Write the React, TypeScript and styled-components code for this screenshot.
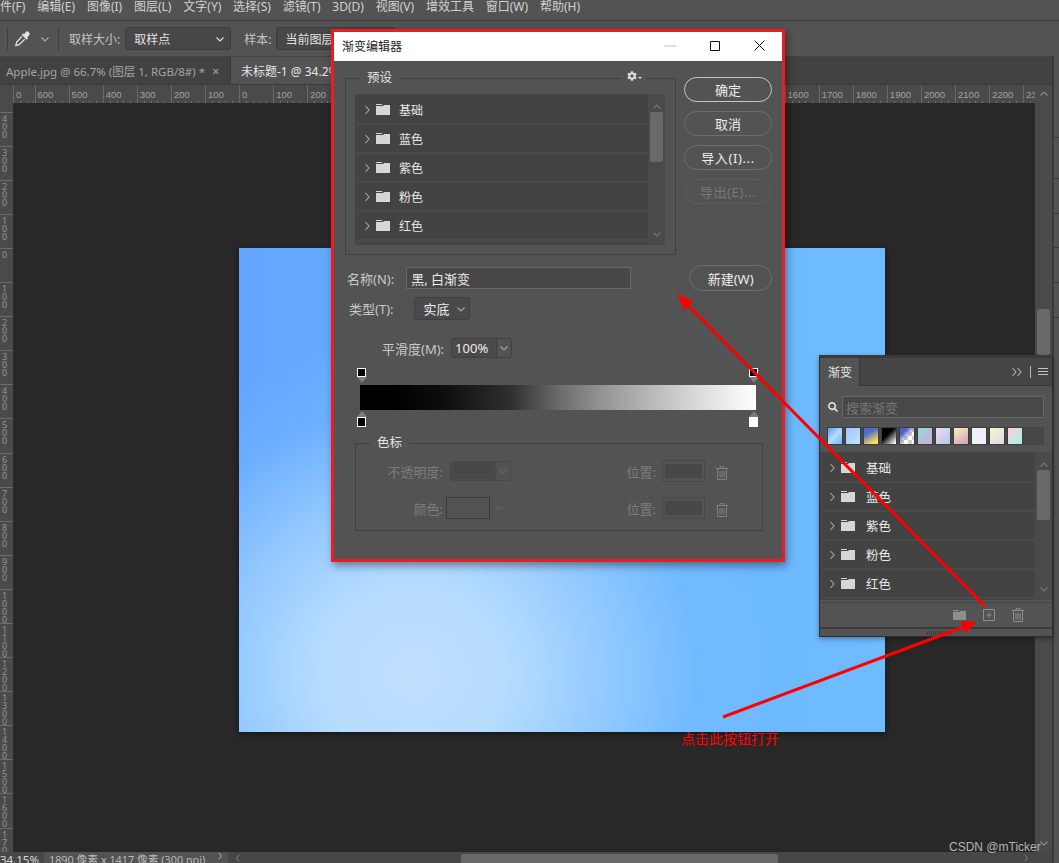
import React from "react";
import styled, { createGlobalStyle } from "styled-components";
import { FaCog, FaSearch } from "react-icons/fa";

const GlobalStyle = createGlobalStyle`
  html, body {
    margin: 0;
    padding: 0;
    background: #535353;
    overflow: hidden;
  }
  * {
    box-sizing: border-box;
  }
`;

const Page = styled.div`
  position: relative;
  width: 1059px;
  height: 863px;
  overflow: hidden;
  background: #535353;
  color: #d6d6d6;
  font-family: "Noto Sans", "Noto Sans CJK SC", sans-serif;
  font-size: 12px;
`;

const MenuBar = styled.div`
  display: flex;
  gap: 11.8px;
  height: 21px;
  margin-left: -12px;
  border-bottom: 1px solid #3c3c3c;
  overflow: hidden;
  line-height: 13px;
  white-space: nowrap;
  color: #d2d2d2;
`;

const OptionsBar = styled.div`
  display: flex;
  align-items: center;
  height: 35px;
  white-space: nowrap;
`;

const OptionDivider = styled.div<{ $left: number }>`
  width: 1px;
  height: 24px;
  margin-left: ${(p) => p.$left}px;
  background: #3f3f3f;
`;

const OptionLabel = styled.span<{ $left: number }>`
  margin-left: ${(p) => p.$left}px;
  color: #c4c4c4;
`;

const OptionIcon = styled.span<{ $left: number; $shade: string }>`
  display: flex;
  margin-left: ${(p) => p.$left}px;
  color: ${(p) => p.$shade};
`;

const OptionSelect = styled.div<{ $width: number; $left: number }>`
  display: flex;
  flex: none;
  align-items: center;
  justify-content: space-between;
  width: ${(p) => p.$width}px;
  height: 23px;
  margin-left: ${(p) => p.$left}px;
  padding: 0 5px 0 8px;
  border: 1px solid #3d3d3d;
  border-radius: 3px;
  background: #474747;
  color: #e2e2e2;
`;

const Lower = styled.div`
  display: flex;
  height: 807px;
`;

const Dock = styled.div`
  flex: none;
  width: 7px;
  border-left: 2px solid #3a3a3a;
  background:
    linear-gradient(#3a3a3a, #3a3a3a) 0 81px / 100% 1px no-repeat,
    linear-gradient(#3a3a3a, #3a3a3a) 0 122px / 100% 1px no-repeat,
    linear-gradient(#3a3a3a, #3a3a3a) 0 157px / 100% 1px no-repeat,
    linear-gradient(#3a3a3a, #3a3a3a) 0 191px / 100% 1px no-repeat,
    linear-gradient(#3a3a3a, #3a3a3a) 0 226px / 100% 1px no-repeat,
    linear-gradient(#3a3a3a, #3a3a3a) 0 261px / 100% 1px no-repeat,
    #535353;
`;

const DocArea = styled.div`
  display: flex;
  flex: 1;
  flex-direction: column;
  min-width: 0;
`;

const TabBar = styled.div`
  display: flex;
  flex: none;
  height: 29px;
  background: #424242;
  border-top: 1px solid #454545;
  border-bottom: 1px solid #3a3a3a;
  white-space: nowrap;
`;

const DocTab = styled.div<{ $active?: boolean }>`
  display: flex;
  flex: none;
  align-items: center;
  width: ${(p) => (p.$active ? "140px" : "231px")};
  padding-left: ${(p) => (p.$active ? "10px" : "6px")};
  background: ${(p) => (p.$active ? "#535353" : "#424242")};
  color: ${(p) => (p.$active ? "#e6e6e6" : "#a4a4a4")};
  border-right: 1px solid #3a3a3a;
  font-size: ${(p) => (p.$active ? "12px" : "11.5px")};
`;

const TabClose = styled.span`
  margin-left: 7px;
  font-size: 13px;
`;

const RulerRow = styled.div`
  display: flex;
  flex: none;
  height: 18px;
  padding-left: 13px;
  background: #4a4a4a;
`;

const RulerTrack = styled.div`
  display: flex;
  flex: none;
  width: 1022px;
  overflow: hidden;
`;

const RulerCell = styled.div<{ $size?: number }>`
  flex: none;
  width: ${(p) => p.$size ?? 34.1}px;
  padding: 3px 0 0 2px;
  border-left: 1px solid #6a6a6a;
  background: repeating-linear-gradient(90deg, transparent 0 5.8px, #707070 5.8px 6.82px) 0 100% / 100% 2px no-repeat;
  font-family: "Liberation Sans", sans-serif;
  font-size: 9.5px;
  line-height: 13px;
  color: #a2a2a2;
`;

const RulerEnd = styled.div`
  display: flex;
  flex: none;
  justify-content: center;
  width: 17px;
  padding-top: 4px;
  color: #8c8c8c;
`;

const Workspace = styled.div`
  display: flex;
  flex: 1;
  min-height: 0;
`;

const VerticalRuler = styled.div`
  flex: none;
  width: 13px;
  overflow: hidden;
  padding-top: 8.6px;
  background: #4a4a4a;
`;

const VerticalCell = styled.div`
  display: flex;
  flex-direction: column;
  height: 34.1px;
  padding: 2px 0 0 2px;
  border-top: 1px solid #6a6a6a;
  font-size: 9px;
  line-height: 8px;
  color: #949494;
`;

const Canvas = styled.div`
  flex: 1;
  padding: 145px 0 0 226px;
  background: #282828;
`;

const Artboard = styled.div`
  width: 646px;
  height: 484px;
  box-shadow: 0 2px 6px rgba(0, 0, 0, 0.45);
  background:
    radial-gradient(ellipse 360px 340px at 27% 88%, #c0e0ff 0%, #b6dcff 26%, rgba(155, 206, 255, 0.85) 52%, rgba(125, 190, 255, 0.35) 78%, rgba(115, 185, 255, 0) 100%),
    linear-gradient(90deg, #62a5ff 0%, #68aeff 30%, #6cb8ff 62%, #6ebbff 100%);
`;

const VerticalScroll = styled.div`
  position: relative;
  flex: none;
  width: 17px;
  padding: 206px 2px 0;
  background: #4a4a4a;
`;

const DocScrollDown = styled.span`
  position: absolute;
  left: 4px;
  bottom: 4px;
  display: flex;
  color: #8c8c8c;
`;

const ScrollThumb = styled.div<{ $height: number }>`
  height: ${(p) => p.$height}px;
  border-radius: 2px;
  background: #696969;
`;

const StatusBar = styled.div`
  display: flex;
  flex: none;
  height: 11px;
  overflow: hidden;
  background: #474747;
  line-height: 16px;
  white-space: nowrap;
`;

const StatusZoom = styled.div`
  flex: none;
  width: 44px;
  color: #d8d8d8;
  font-size: 11.5px;
`;

const StatusInfo = styled.div`
  display: flex;
  flex: none;
  justify-content: space-between;
  align-items: flex-start;
  width: 184px;
  padding: 0 4px 0 5px;
  background: #535353;
  color: #b8b8b8;
  font-size: 10.8px;
`;

const HorizontalScroll = styled.div`
  position: relative;
  display: flex;
  flex: 1;
  padding: 2px 0 0 233px;
`;

const HorizontalThumb = styled.div`
  width: 317px;
  height: 9px;
  border-radius: 2px 2px 0 0;
  background: #696969;
`;

const HorizontalArrow = styled.span<{ $at: number }>`
  position: absolute;
  left: ${(p) => p.$at}px;
  top: 2px;
  display: flex;
  color: #8c8c8c;
`;

const Dialog = styled.div`
  position: absolute;
  left: 331px;
  top: 29px;
  width: 454px;
  height: 533px;
  border: 3px solid #ed1c24;
  background: #535353;
  box-shadow: 2px 4px 8px rgba(0, 0, 0, 0.4);
`;

const TitleBar = styled.div`
  display: flex;
  align-items: center;
  height: 29px;
  padding-left: 8px;
  background: #fff;
  color: #222;
  font-size: 12px;
`;

const TitleText = styled.span`
  margin-bottom: 2px;
`;

const WindowControls = styled.div`
  display: flex;
  margin-left: auto;
`;

const WindowControl = styled.div`
  display: flex;
  align-items: center;
  justify-content: center;
  width: 45px;
  height: 29px;
  padding-bottom: 2px;
`;

const DialogTop = styled.div`
  display: flex;
  align-items: flex-start;
  padding: 17px 0 0 11px;
`;

const GroupBox = styled.div<{ $width: number; $height: number; $margin?: string }>`
  position: relative;
  flex: none;
  width: ${(p) => p.$width}px;
  height: ${(p) => p.$height}px;
  margin: ${(p) => p.$margin ?? "0"};
  border: 1px solid #404040;
`;

const GroupTitle = styled.div<{ $left: number }>`
  width: fit-content;
  height: 16px;
  margin: -9px 0 0 ${(p) => p.$left}px;
  padding: 0 7px;
  background: #535353;
  color: #e4e4e4;
  font-size: 12.5px;
  line-height: 16px;
`;

const GearMenu = styled.div`
  position: absolute;
  top: -8px;
  right: 29px;
  display: flex;
  align-items: flex-end;
  gap: 1px;
  padding: 0 4px 0 5px;
  background: #535353;
  color: #d8d8d8;
`;

const Caret = styled.span`
  width: 0;
  height: 0;
  margin-bottom: 2px;
  border: 2px solid transparent;
  border-top: 2px solid #d8d8d8;
  border-bottom: 0;
`;

const ListFrame = styled.div<{ $margin: string; $height: number }>`
  display: flex;
  height: ${(p) => p.$height}px;
  margin: ${(p) => p.$margin};
  overflow: hidden;
  background: #444;
`;

const ListBody = styled.div`
  flex: 1;
  min-width: 0;
  padding: 2px 0 0 2px;
`;

const FolderRow = styled.div<{ $fontSize: number }>`
  display: flex;
  align-items: center;
  height: 29px;
  padding-left: 5px;
  border-bottom: 2px solid #4a4a4a;
  background: #434343;
  color: #e8e8e8;
  font-size: ${(p) => p.$fontSize}px;
`;

const RowChevron = styled.span`
  display: flex;
  color: #a8a8a8;
`;

const FolderMark = styled.span`
  display: flex;
  margin-left: 4px;
  color: #d6d6d6;
`;

const FolderName = styled.span<{ $gap: number }>`
  margin-left: ${(p) => p.$gap}px;
`;

const ListScroll = styled.div`
  position: relative;
  flex: none;
  width: 17px;
  padding: 18px 2px 0;
  background: #4a4a4a;
  color: #777;
`;

const ScrollArrow = styled.span<{ $end: "top" | "bottom" }>`
  position: absolute;
  left: 4px;
  ${(p) => (p.$end === "top" ? "top: 8px;" : "bottom: 6px;")}
  display: flex;
`;

const ButtonColumn = styled.div`
  display: flex;
  flex: none;
  flex-direction: column;
  gap: 9px;
  width: 88px;
  margin: -1px 0 0 8px;
`;

const PillButton = styled.div<{ $kind?: "primary" | "disabled"; $wide?: boolean }>`
  display: flex;
  flex: none;
  align-items: center;
  justify-content: center;
  height: 25px;
  border: 1.5px solid
    ${(p) => (p.$kind === "primary" ? "#c4c4c4" : p.$kind === "disabled" ? "#5d5d5d" : "#6e6e6e")};
  border-radius: 13px;
  color: ${(p) => (p.$kind === "disabled" ? "#787878" : "#ececec")};
  font-size: 13px;
  letter-spacing: ${(p) => (p.$wide ? "0.6px" : "0")};
`;

const NewButton = styled(PillButton)`
  width: 83px;
  height: 26px;
  margin-left: 58px;
`;

const FieldRow = styled.div<{ $top: number; $left: number }>`
  display: flex;
  align-items: center;
  margin: ${(p) => p.$top}px 0 0 ${(p) => p.$left}px;
  white-space: nowrap;
`;

const FieldLabel = styled.span<{ $width?: number; $gap: number; $muted?: boolean }>`
  flex: none;
  width: ${(p) => (p.$width ? `${p.$width}px` : "auto")};
  margin-right: ${(p) => p.$gap}px;
  text-align: right;
  color: ${(p) => (p.$muted ? "#7d7d7d" : "#c8c8c8")};
  font-size: 13px;
`;

const NameInput = styled.div`
  display: flex;
  align-items: center;
  width: 225px;
  height: 22px;
  padding-left: 4px;
  border: 1px solid #686868;
  background: #474747;
  color: #ececec;
  font-size: 13px;
`;

const TypeSelect = styled.div`
  display: flex;
  align-items: center;
  justify-content: space-between;
  width: 56px;
  height: 23px;
  padding: 0 3px 0 9px;
  border: 1px solid #404040;
  border-radius: 3px;
  background: #4a4a4a;
  color: #ececec;
  font-size: 13px;
`;

const SoftChevron = styled.span`
  display: flex;
  color: #a8a8a8;
`;

const SpinBox = styled.div<{ $muted?: boolean }>`
  display: flex;
  flex: none;
  width: 61px;
  height: 20px;
  border: 1px solid ${(p) => (p.$muted ? "#484848" : "#404040")};
  border-radius: 3px;
  background: #4a4a4a;
  color: #ececec;
  font-size: 13px;
  line-height: 18px;
`;

const SpinValue = styled.div`
  flex: 1;
  padding-left: 3px;
`;

const SpinButton = styled.div<{ $muted?: boolean }>`
  display: flex;
  flex: none;
  align-items: center;
  justify-content: center;
  width: 15px;
  border-left: 1px solid ${(p) => (p.$muted ? "#484848" : "#404040")};
  background: #535353;
  border-radius: 0 3px 3px 0;
  color: ${(p) => (p.$muted ? "#666" : "#a8a8a8")};
`;

const MutedSpinValue = styled.div`
  flex: 1;
  margin: 2px;
  background: #474747;
`;

const GradientEditor = styled.div`
  width: 401px;
  margin: 10px 0 0 23px;
`;

const StopRow = styled.div<{ $top?: number }>`
  display: flex;
  justify-content: space-between;
  margin-top: ${(p) => p.$top ?? 0}px;
`;

const StopMarker = styled.div<{ $below?: boolean }>`
  display: flex;
  flex-direction: ${(p) => (p.$below ? "column" : "column-reverse")};
  align-items: center;
  width: 9px;
`;

const StopArrow = styled.div<{ $below?: boolean }>`
  width: 0;
  height: 0;
  border-left: 5px solid transparent;
  border-right: 5px solid transparent;
  ${(p) => (p.$below ? "border-bottom: 6px solid #7d7d7d;" : "border-top: 6px solid #7d7d7d;")}
`;

const StopSquare = styled.div<{ $fill: string; $below?: boolean }>`
  width: 9px;
  height: ${(p) => (p.$below ? "10px" : "9px")};
  border: 1.5px solid #fff;
  background: ${(p) => p.$fill};
`;

const GradientBar = styled.div`
  width: 396px;
  height: 25px;
  margin: 2px 0 0 3px;
  background: linear-gradient(90deg, #000 0%, #000 8%, #0f0f0f 22%, #2f2f2f 38%, #6a6a6a 50%, #909090 60%, #b4b4b4 72%, #dcdcdc 86%, #fff 100%);
`;

const StopFields = styled.div<{ $top: number }>`
  display: flex;
  align-items: center;
  height: 22px;
  margin-top: ${(p) => p.$top}px;
  padding-right: 34px;
`;

const ColorSwatch = styled.div`
  flex: none;
  width: 44px;
  height: 22px;
  border: 1px solid #3a3a3a;
`;

const SwatchCaret = styled.span`
  display: flex;
  margin-left: 4px;
  color: #666;
`;

const PositionField = styled.div`
  display: flex;
  flex: none;
  width: 43px;
  height: 22px;
  margin-right: 11px;
  padding: 3px 2px;
  border: 1px solid #484848;
`;

const PositionFill = styled.div`
  flex: 1;
  background: #474747;
`;

const FieldSpacer = styled.div`
  flex: 1;
`;

const TrashMark = styled.span`
  display: flex;
  margin-top: 3px;
  color: #808080;
`;

const GradientPanel = styled.div`
  position: absolute;
  left: 819px;
  top: 355px;
  width: 234px;
  height: 282px;
  border: 1px solid #2f2f2f;
  border-top-width: 3px;
  border-top-color: #3a3a3a;
  background: #535353;
  box-shadow: 0 2px 5px rgba(0, 0, 0, 0.35);
`;

const PanelHeader = styled.div`
  display: flex;
  align-items: center;
  height: 28px;
  background: #444;
  border-bottom: 1px solid #383838;
`;

const PanelTab = styled.div`
  display: flex;
  align-items: center;
  align-self: stretch;
  width: 40px;
  height: 28px;
  padding-left: 8px;
  background: #535353;
  border-right: 1px solid #383838;
  color: #e6e6e6;
`;

const PanelActions = styled.div`
  display: flex;
  align-items: center;
  margin-left: auto;
  padding-right: 4px;
  color: #b4b4b4;
`;

const DoubleChevron = styled.span`
  display: flex;
  margin-left: -5px;
`;

const PanelPipe = styled.span`
  width: 1px;
  height: 12px;
  margin: 0 7px 0 6px;
  background: #b4b4b4;
`;

const MenuLines = styled.span`
  width: 10px;
  height: 7px;
  border-top: 1px solid #c4c4c4;
  border-bottom: 1px solid #c4c4c4;
  background: linear-gradient(#c4c4c4, #c4c4c4) 0 50% / 100% 1px no-repeat;
`;

const SearchRow = styled.div`
  display: flex;
  align-items: center;
  gap: 4px;
  margin-top: 10px;
  padding-left: 8px;
  color: #e6e6e6;
`;

const SearchInput = styled.div`
  display: flex;
  align-items: center;
  width: 202px;
  height: 22px;
  padding-left: 3px;
  border: 1px solid #666;
  background: #484848;
  color: #777;
  font-size: 13px;
`;

const SwatchStrip = styled.div`
  display: flex;
  gap: 2px;
  width: 217px;
  height: 18px;
  margin: 9px 0 0 7px;
  background: #474747;
`;

const Swatch = styled.div<{ $fill: string }>`
  flex: none;
  width: 16px;
  height: 18px;
  border: 1px solid #3c3c3c;
  background: ${(p) => p.$fill};
`;

const PanelFooter = styled.div`
  display: flex;
  align-items: center;
  justify-content: flex-end;
  gap: 17px;
  height: 27px;
  margin-top: 2px;
  padding-right: 28px;
  border-top: 1px solid #444;
  border-bottom: 2px solid #3a3a3a;
  color: #8e8e8e;
`;

const PanelGrip = styled.div`
  display: flex;
  justify-content: center;
  padding-top: 2px;
`;

const GripLines = styled.div`
  width: 19px;
  height: 4px;
  background: repeating-linear-gradient(90deg, #3c3c3c 0 1px, transparent 1px 2px);
`;

const Annotations = styled.svg`
  position: absolute;
  left: 0;
  top: 0;
  pointer-events: none;
`;

const NoteText = styled.div`
  position: absolute;
  left: 681px;
  top: 730px;
  color: #f00;
  font-size: 14px;
  line-height: 18px;
`;

const Watermark = styled.div`
  position: absolute;
  left: 949px;
  top: 839px;
  color: #b4b4b4;
  font-family: "Liberation Sans", sans-serif;
  font-size: 12px;
  line-height: 16px;
`;

type ChevronDir = "up" | "down" | "left" | "right";

const Chevron = ({ dir = "down", size = 10 }: { dir?: ChevronDir; size?: number }) => {
  const shapes: Record<ChevronDir, string> = {
    up: "M1.5 6.5 5 3l3.5 3.5",
    down: "M1.5 3.5 5 7l3.5-3.5",
    left: "M6.5 1 3 5l3.5 4",
    right: "M3.5 1 7 5l-3.5 4",
  };
  return (
    <svg width={size} height={size} viewBox="0 0 10 10" fill="none" stroke="currentColor" strokeWidth="1.1">
      <path d={shapes[dir]} />
    </svg>
  );
};

const FolderIcon = ({ width = 14 }: { width?: number }) => (
  <svg width={width} height={(width * 11) / 14} viewBox="0 0 14 11" fill="currentColor">
    <path d="M0 0h6v1H0zM0 2h7l1-1h6v10H0z" />
  </svg>
);

const TrashIcon = () => (
  <svg width="12" height="14" viewBox="0 0 12 14" fill="none" stroke="currentColor" strokeWidth="1">
    <path d="M0 2.500h12M4 2.500V.7h4v1.800M1.500 2.500v11h9v-11M4 5v6.500M6 5v6.500M8 5v6.500" />
  </svg>
);

const PlusBoxIcon = () => (
  <svg width="12" height="12" viewBox="0 0 12 12" fill="none" stroke="currentColor" strokeWidth="1">
    <path d="M.5.5h11v11H.5zM6 3.500v5M3.500 6h5" />
  </svg>
);

const PipetteIcon = () => (
  <svg width="18" height="18" viewBox="0 0 18 18" fill="none">
    <path d="M11.500 2.200a2.400 2.400 0 0 1 3.900 2.700l-2.300 2.500 1 1-1.400 1.400-5-5 1.400-1.400 1 1z" fill="#e4e4e4" />
    <path d="M8 6.500 2.700 12l-.9 3.600 3.400-1 5.500-5.400" stroke="#e4e4e4" strokeWidth="1.2" />
  </svg>
);

const menuItems = ["文件(F)", "编辑(E)", "图像(I)", "图层(L)", "文字(Y)", "选择(S)", "滤镜(T)", "3D(D)", "视图(V)", "增效工具", "窗口(W)", "帮助(H)"];
const rulerMarks = [600, 500, 400, 300, 200, 100, 0, 100, 200, 300, 400, 500, 600, 700, 800, 900, 1000, 1100, 1200, 1300, 1400, 1500, 1600, 1700, 1800, 1900, 2000, 2100, 2200, 2300];
const sideMarks = [400, 300, 200, 100, 0, 100, 200, 300, 400, 500, 600, 700, 800, 900, 1000, 1100, 1200, 1300, 1400, 1500, 1600, 1700];
const folders = ["基础", "蓝色", "紫色", "粉色", "红色"];
const swatches = [
  "linear-gradient(135deg, #5a9cff 0%, #b4dcff 50%, #6cb8ff 100%)",
  "linear-gradient(135deg, #a0c4ff, #bfe6ff)",
  "linear-gradient(150deg, #4c6cd0 30%, #ffe24e 85%)",
  "linear-gradient(135deg, #000 40%, #fff 95%)",
  "linear-gradient(135deg, #4c63c4 25%, transparent 60%), repeating-conic-gradient(#cfcfcf 0 25%, #fff 0 50%) 0 0 / 8px 8px",
  "linear-gradient(135deg, #8bdde0, #d6a8d4)",
  "linear-gradient(135deg, #eadff0, #b6c4ea)",
  "linear-gradient(150deg, #fdf2b6, #d29cc4)",
  "linear-gradient(135deg, #e0f7f8, #fbecfc)",
  "linear-gradient(135deg, #faf4c8, #dcd8f4)",
  "linear-gradient(135deg, #fdcfe0, #a6efe6)",
];

interface FolderListProps {
  height: number;
  margin: string;
  gap: number;
  fontSize: number;
}

const FolderList = ({ height, margin, gap, fontSize }: FolderListProps) => (
  <ListFrame $height={height} $margin={margin}>
    <ListBody>
      {folders.map((name) => (
        <FolderRow key={name} $fontSize={fontSize}>
          <RowChevron>
            <Chevron dir="right" />
          </RowChevron>
          <FolderMark>
            <FolderIcon />
          </FolderMark>
          <FolderName $gap={gap}>{name}</FolderName>
        </FolderRow>
      ))}
    </ListBody>
    <ListScroll>
      <ScrollArrow $end="top">
        <Chevron dir="up" />
      </ScrollArrow>
      <ScrollThumb $height={50} />
      <ScrollArrow $end="bottom">
        <Chevron />
      </ScrollArrow>
    </ListScroll>
  </ListFrame>
);

const GradientEditorDialog = () => (
  <Dialog>
    <TitleBar>
      <TitleText>渐变编辑器</TitleText>
      <WindowControls>
        <WindowControl>
          <svg width="12" height="2" viewBox="0 0 12 2">
            <path d="M0 1h12" stroke="#bdbdbd" />
          </svg>
        </WindowControl>
        <WindowControl>
          <svg width="10" height="10" viewBox="0 0 10 10" fill="none">
            <path d="M.5.5h9v9h-9z" stroke="#111" />
          </svg>
        </WindowControl>
        <WindowControl>
          <svg width="11" height="11" viewBox="0 0 11 11" fill="none">
            <path d="m.5.5 10 10M10.500.5l-10 10" stroke="#111" />
          </svg>
        </WindowControl>
      </WindowControls>
    </TitleBar>
    <DialogTop>
      <GroupBox $width={331} $height={177}>
        <GroupTitle $left={14}>预设</GroupTitle>
        <GearMenu>
          <FaCog size={10} />
          <Caret />
        </GearMenu>
        <FolderList height={151} margin="8px 10px 0 9px" gap={9} fontSize={12} />
      </GroupBox>
      <ButtonColumn>
        <PillButton $kind="primary">确定</PillButton>
        <PillButton>取消</PillButton>
        <PillButton $wide>导入(I)...</PillButton>
        <PillButton $wide $kind="disabled">导出(E)...</PillButton>
      </ButtonColumn>
    </DialogTop>
    <FieldRow $top={10} $left={13}>
      <FieldLabel $gap={12}>名称(N):</FieldLabel>
      <NameInput>黑, 白渐变</NameInput>
      <NewButton>新建(W)</NewButton>
    </FieldRow>
    <FieldRow $top={6} $left={15}>
      <FieldLabel $gap={20}>类型(T):</FieldLabel>
      <TypeSelect>
        实底
        <SoftChevron>
          <Chevron />
        </SoftChevron>
      </TypeSelect>
    </FieldRow>
    <FieldRow $top={18} $left={48}>
      <FieldLabel $gap={7}>平滑度(M):</FieldLabel>
      <SpinBox>
        <SpinValue>100%</SpinValue>
        <SpinButton>
          <Chevron />
        </SpinButton>
      </SpinBox>
    </FieldRow>
    <GradientEditor>
      <StopRow>
        <StopMarker>
          <StopArrow />
          <StopSquare $fill="#000" />
        </StopMarker>
        <StopMarker>
          <StopArrow />
          <StopSquare $fill="#000" />
        </StopMarker>
      </StopRow>
      <GradientBar />
      <StopRow $top={1}>
        <StopMarker $below>
          <StopArrow $below />
          <StopSquare $below $fill="#000" />
        </StopMarker>
        <StopMarker $below>
          <StopArrow $below />
          <StopSquare $below $fill="#fff" />
        </StopMarker>
      </StopRow>
    </GradientEditor>
    <GroupBox $width={408} $height={88} $margin="16px 0 0 21px">
      <GroupTitle $left={14}>色标</GroupTitle>
      <StopFields $top={9}>
        <FieldLabel $width={87} $gap={7} $muted>不透明度:</FieldLabel>
        <SpinBox $muted>
          <MutedSpinValue />
          <SpinButton $muted>
            <Chevron />
          </SpinButton>
        </SpinBox>
        <FieldSpacer />
        <FieldLabel $gap={6} $muted>位置:</FieldLabel>
        <PositionField>
          <PositionFill />
        </PositionField>
        <TrashMark>
          <TrashIcon />
        </TrashMark>
      </StopFields>
      <StopFields $top={15}>
        <FieldLabel $width={87} $gap={3} $muted>颜色:</FieldLabel>
        <ColorSwatch />
        <SwatchCaret>
          <Chevron />
        </SwatchCaret>
        <FieldSpacer />
        <FieldLabel $gap={6} $muted>位置:</FieldLabel>
        <PositionField>
          <PositionFill />
        </PositionField>
        <TrashMark>
          <TrashIcon />
        </TrashMark>
      </StopFields>
    </GroupBox>
  </Dialog>
);

const GradientsPanel = () => (
  <GradientPanel>
    <PanelHeader>
      <PanelTab>渐变</PanelTab>
      <PanelActions>
        <Chevron dir="right" />
        <DoubleChevron>
          <Chevron dir="right" />
        </DoubleChevron>
        <PanelPipe />
        <MenuLines />
      </PanelActions>
    </PanelHeader>
    <SearchRow>
      <FaSearch size={10} />
      <SearchInput>搜索渐变</SearchInput>
    </SearchRow>
    <SwatchStrip>
      {swatches.map((fill) => (
        <Swatch key={fill} $fill={fill} />
      ))}
    </SwatchStrip>
    <FolderList height={148} margin="7px 0 1px 0" gap={11} fontSize={12.5} />
    <PanelFooter>
      <FolderIcon width={13} />
      <PlusBoxIcon />
      <TrashIcon />
    </PanelFooter>
    <PanelGrip>
      <GripLines />
    </PanelGrip>
  </GradientPanel>
);

export default function App() {
  return (
    <Page>
      <GlobalStyle />
      <MenuBar>
        {menuItems.map((item) => (
          <span key={item}>{item}</span>
        ))}
      </MenuBar>
      <OptionsBar>
        <OptionDivider $left={7} />
        <OptionIcon $left={6} $shade="#e4e4e4">
          <PipetteIcon />
        </OptionIcon>
        <OptionIcon $left={8} $shade="#aaa">
          <Chevron />
        </OptionIcon>
        <OptionDivider $left={8} />
        <OptionLabel $left={10}>取样大小:</OptionLabel>
        <OptionSelect $width={106} $left={5}>
          取样点
          <Chevron />
        </OptionSelect>
        <OptionLabel $left={13}>样本:</OptionLabel>
        <OptionSelect $width={120} $left={5}>当前图层</OptionSelect>
      </OptionsBar>
      <Lower>
        <DocArea>
          <TabBar>
            <DocTab>
              Apple.jpg @ 66.7% (图层 1, RGB/8#) *<TabClose>×</TabClose>
            </DocTab>
            <DocTab $active>未标题-1 @ 34.2%</DocTab>
          </TabBar>
          <RulerRow>
            <RulerTrack>
              <RulerCell $size={21.5}>0</RulerCell>
              {rulerMarks.map((mark, i) => (
                <RulerCell key={`${mark}-${i}`}>{mark}</RulerCell>
              ))}
            </RulerTrack>
            <RulerEnd>
              <Chevron dir="up" />
            </RulerEnd>
          </RulerRow>
          <Workspace>
            <VerticalRuler>
              {sideMarks.map((mark, i) => (
                <VerticalCell key={`${mark}-${i}`}>
                  {String(mark).split("").map((digit, d) => (
                    <span key={d}>{digit}</span>
                  ))}
                </VerticalCell>
              ))}
            </VerticalRuler>
            <Canvas>
              <Artboard />
            </Canvas>
            <VerticalScroll>
              <ScrollThumb $height={46} />
              <DocScrollDown>
                <Chevron />
              </DocScrollDown>
            </VerticalScroll>
          </Workspace>
          <StatusBar>
            <StatusZoom>34.15%</StatusZoom>
            <StatusInfo>
              1890 像素 x 1417 像素 (300 ppi)
              <Chevron dir="right" size={8} />
            </StatusInfo>
            <HorizontalScroll>
              <HorizontalArrow $at={6}>
                <Chevron dir="left" size={8} />
              </HorizontalArrow>
              <HorizontalThumb />
              <HorizontalArrow $at={794}>
                <Chevron dir="right" size={8} />
              </HorizontalArrow>
            </HorizontalScroll>
          </StatusBar>
        </DocArea>
        <Dock />
      </Lower>
      <GradientEditorDialog />
      <GradientsPanel />
      <Annotations width="1059" height="863" viewBox="0 0 1059 863">
        <path d="M985 606 681 298" stroke="#f00" strokeWidth="3" />
        <polygon points="677,294 684,310 693,301" fill="#f00" />
        <path d="M723 717 969 625" stroke="#f00" strokeWidth="3" />
        <polygon points="977,622 961,621 965,633" fill="#f00" />
      </Annotations>
      <NoteText>点击此按钮打开</NoteText>
      <Watermark>CSDN @mTicker</Watermark>
    </Page>
  );
}
